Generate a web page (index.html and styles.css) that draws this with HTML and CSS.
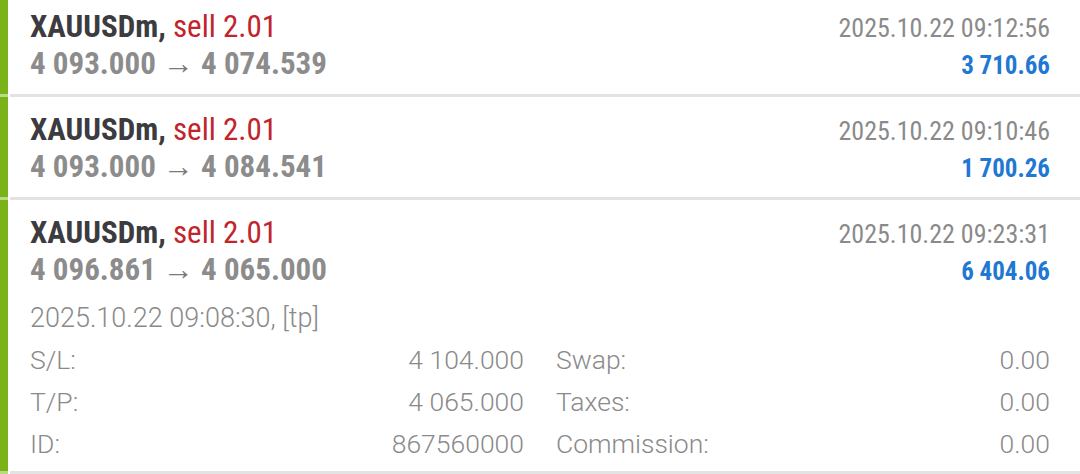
FILE: index.html
```html
<!DOCTYPE html>
<html>
<head>
<meta charset="utf-8">
<link rel="stylesheet" href="styles.css">
</head>
<body>
<div class="list">
  <div class="deal first">
    <div class="line">
      <div class="title"><span class="sym">XAUUSDm,</span> <span class="side">sell 2.01</span></div>
      <div class="time">2025.10.22 09:12:56</div>
    </div>
    <div class="line">
      <div class="price">4 093.000 <span class="arrow">→</span> 4 074.539</div>
      <div class="profit">3 710.66</div>
    </div>
  </div>
  <div class="sep"><span class="sep-bar"></span></div>
  <div class="deal">
    <div class="line">
      <div class="title"><span class="sym">XAUUSDm,</span> <span class="side">sell 2.01</span></div>
      <div class="time">2025.10.22 09:10:46</div>
    </div>
    <div class="line">
      <div class="price">4 093.000 <span class="arrow">→</span> 4 084.541</div>
      <div class="profit">1 700.26</div>
    </div>
  </div>
  <div class="sep"><span class="sep-bar"></span></div>
  <div class="deal open">
    <div class="line">
      <div class="title"><span class="sym">XAUUSDm,</span> <span class="side">sell 2.01</span></div>
      <div class="time">2025.10.22 09:23:31</div>
    </div>
    <div class="line">
      <div class="price">4 096.861 <span class="arrow">→</span> 4 065.000</div>
      <div class="profit">6 404.06</div>
    </div>
    <div class="opened">2025.10.22 09:08:30, [tp]</div>
    <div class="details">
      <div class="cell"><span>S/L:</span><span>4 104.000</span></div>
      <div class="cell"><span>Swap:</span><span>0.00</span></div>
      <div class="cell"><span>T/P:</span><span>4 065.000</span></div>
      <div class="cell"><span>Taxes:</span><span>0.00</span></div>
      <div class="cell"><span>ID:</span><span>867560000</span></div>
      <div class="cell"><span>Commission:</span><span>0.00</span></div>
    </div>
  </div>
  <div class="sep"><span class="sep-bar"></span></div>
</div>
</body>
</html>
```

FILE: styles.css
```css
html, body {
  margin: 0;
  padding: 0;
  background: #ffffff;
}
body {
  width: 1080px;
  height: 474px;
  overflow: hidden;
  font-family: "Roboto Condensed", Roboto, "Liberation Sans", sans-serif;
}
.list {
  display: flex;
  flex-direction: column;
}
.deal {
  border-left: 8px solid #7ab317;
  padding: 14px 30px 12px 22px;
  background: #fff;
}
.deal.first {
  padding-top: 8px;
}
.deal.open {
  padding-bottom: 6px;
}
.line {
  display: flex;
  justify-content: space-between;
  align-items: baseline;
  height: 37px;
}
.title {
  font-size: 31px;
  font-weight: 700;
  line-height: 37px;
  white-space: nowrap;
}
.sym {
  color: #3b3b40;
}
.side {
  color: #c2242b;
  font-weight: 400;
}
.price {
  font-size: 31px;
  font-weight: 700;
  color: #8c8c8c;
  line-height: 37px;
  white-space: nowrap;
}
.arrow {
  font-family: "Liberation Sans", sans-serif;
  font-weight: 400;
  color: #7a7a7a;
}
.time {
  font-size: 26px;
  color: #8a8a8a;
  line-height: 37px;
}
.profit {
  font-size: 25px;
  font-weight: 700;
  color: #1f78d1;
  line-height: 37px;
}
.opened {
  font-family: Roboto, "Liberation Sans", sans-serif;
  font-weight: 300;
  font-size: 27px;
  color: #8a8a8a;
  line-height: 42px;
  margin-top: 9px;
}
.details {
  display: grid;
  grid-template-columns: 1fr 1fr;
  column-gap: 32px;
}
.cell {
  display: flex;
  justify-content: space-between;
  font-family: Roboto, "Liberation Sans", sans-serif;
  font-weight: 300;
  font-size: 26.5px;
  color: #8a8a8a;
  line-height: 42px;
}
.sep {
  display: flex;
  height: 3px;
  background: #e3e3e3;
}
.sep-bar {
  width: 8px;
  background: #b9da80;
  border-right: 2px solid #ffffff;
}
```
